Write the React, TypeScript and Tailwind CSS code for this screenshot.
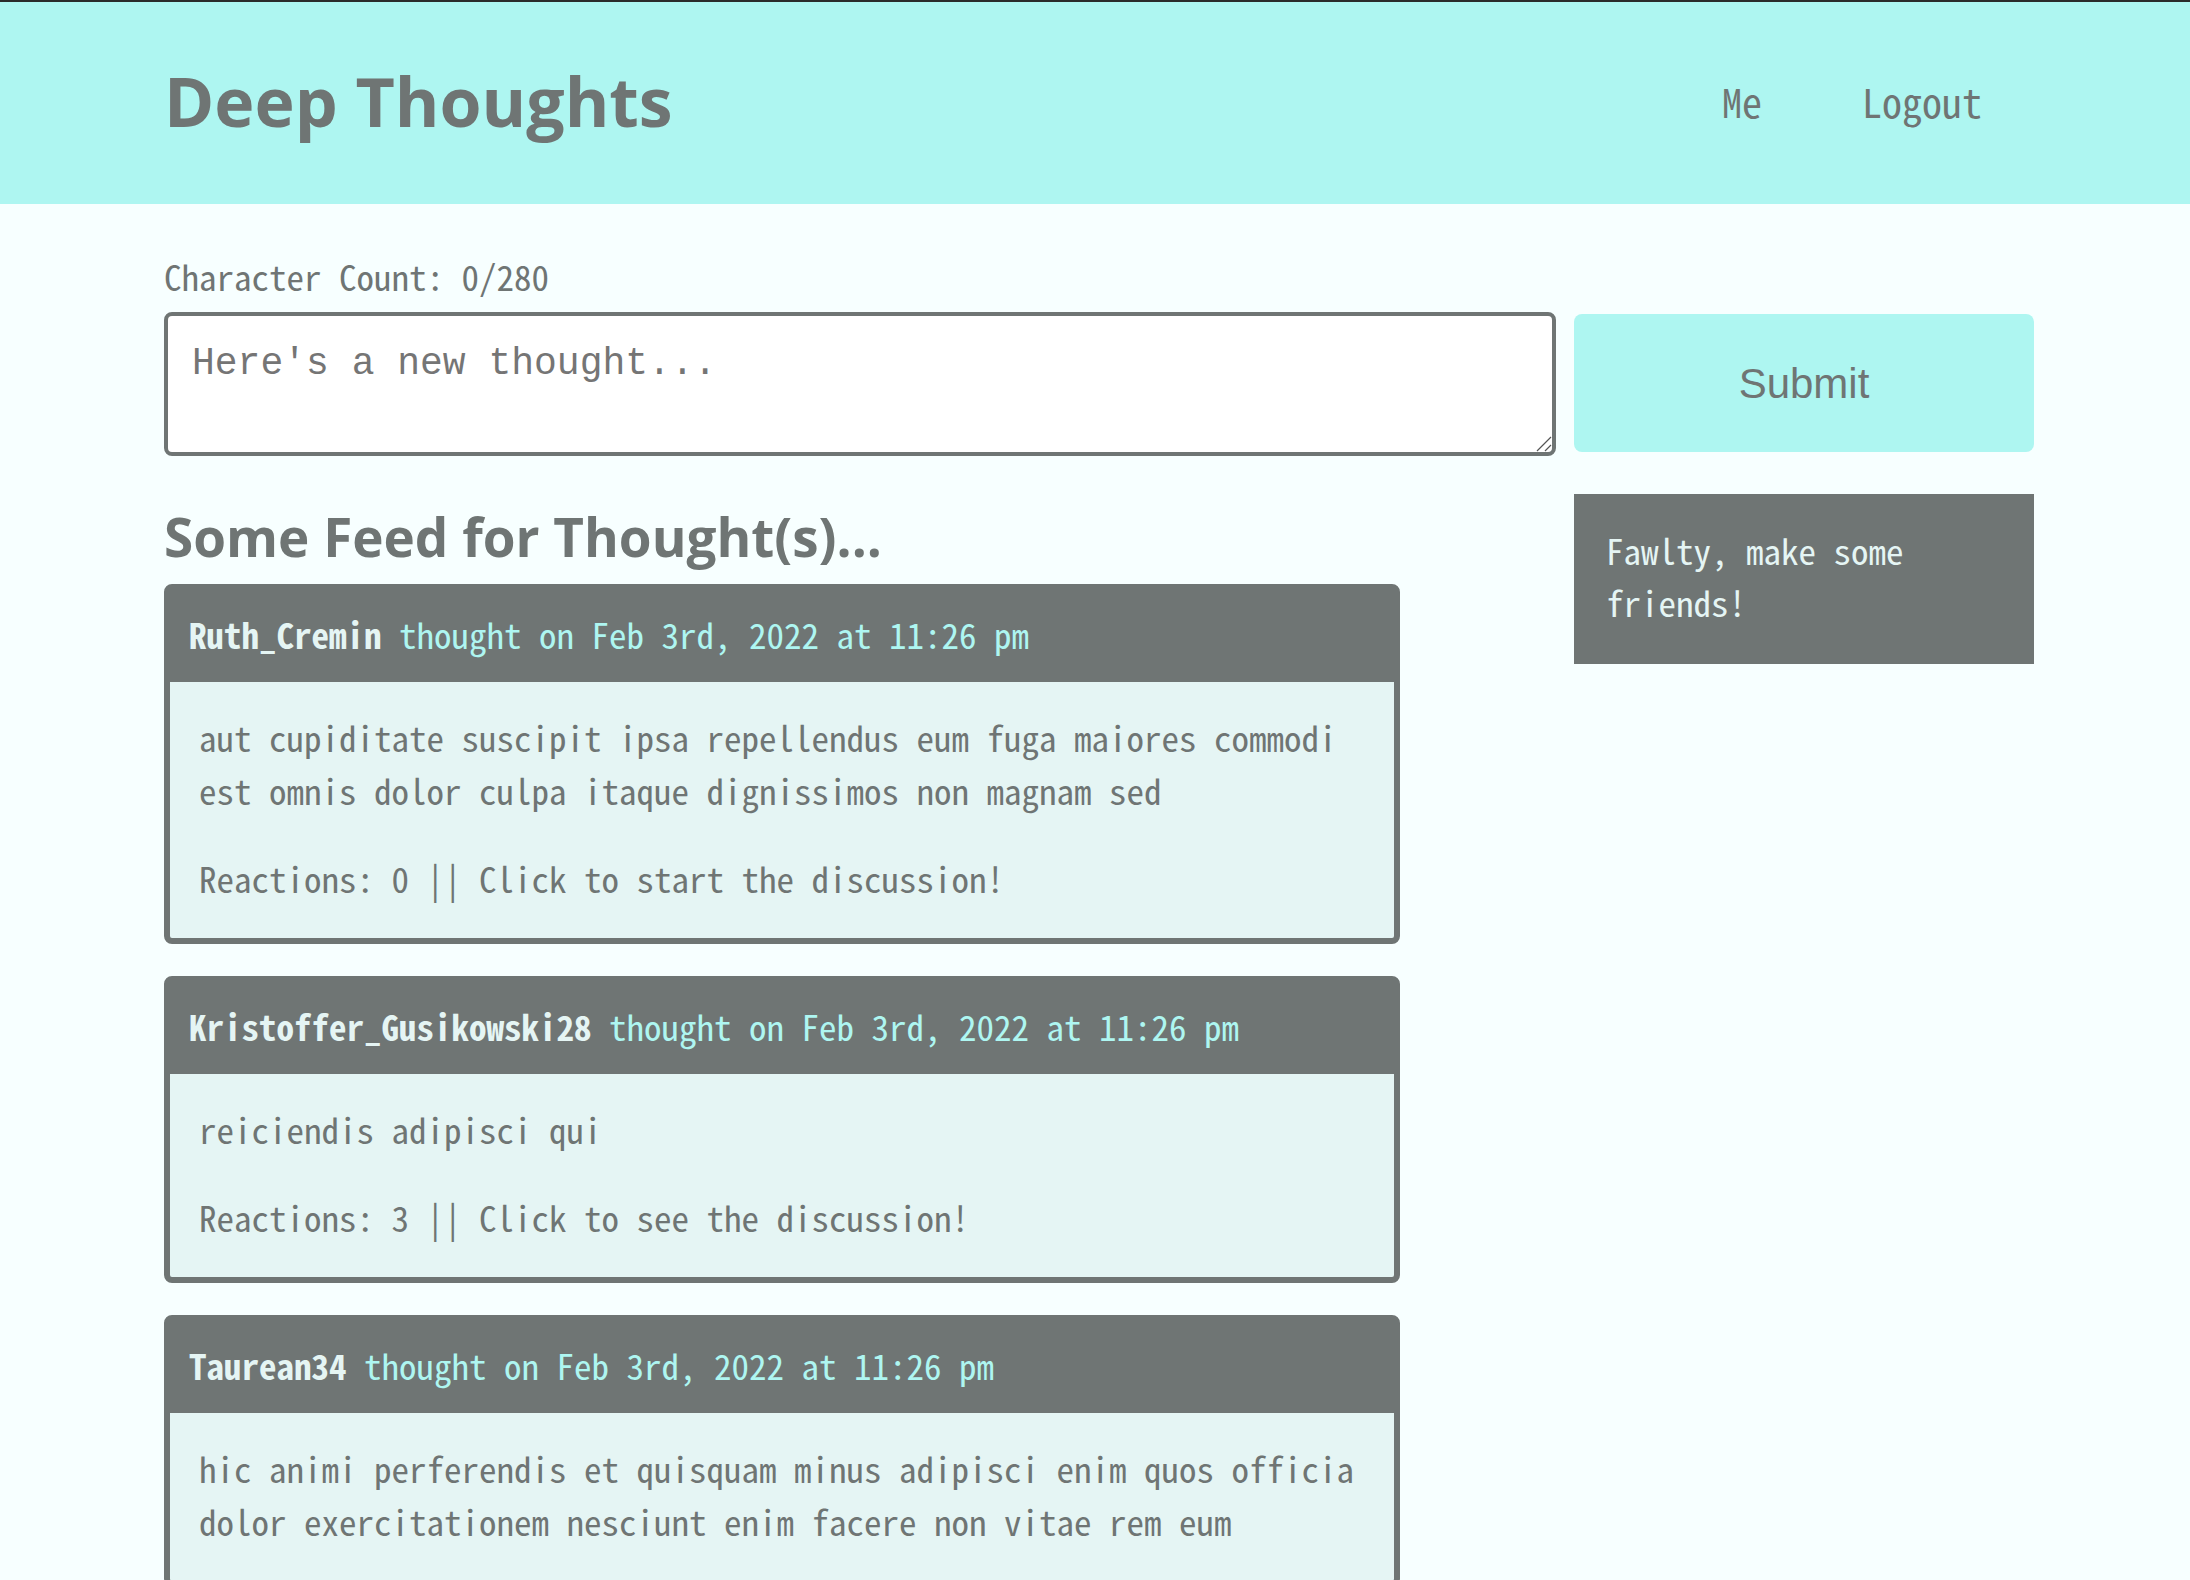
import { useState } from "react";

type Thought = {
  id: number;
  username: string;
  createdAt: string;
  text: string;
  reactionCount?: number;
};

const thoughts: Thought[] = [
  {
    id: 1,
    username: "Ruth_Cremin",
    createdAt: "Feb 3rd, 2022 at 11:26 pm",
    text: "aut cupiditate suscipit ipsa repellendus eum fuga maiores commodi est omnis dolor culpa itaque dignissimos non magnam sed",
    reactionCount: 0,
  },
  {
    id: 2,
    username: "Kristoffer_Gusikowski28",
    createdAt: "Feb 3rd, 2022 at 11:26 pm",
    text: "reiciendis adipisci qui",
    reactionCount: 3,
  },
  {
    id: 3,
    username: "Taurean34",
    createdAt: "Feb 3rd, 2022 at 11:26 pm",
    text: "hic animi perferendis et quisquam minus adipisci enim quos officia dolor exercitationem nesciunt enim facere non vitae rem eum",
  },
];

function Header() {
  return (
    <header className="flex h-[204px] items-center justify-between border-t-2 border-[#2b2b2b] bg-[#aef6f1] pr-[208px] pb-1 pl-[164px]">
      <h1 className="font-['Open_Sans',sans-serif] text-[68px] leading-[92px] font-bold">
        <a href="#home">Deep Thoughts</a>
      </h1>
      <nav className="flex gap-[100px] text-[40px] leading-[52px]">
        <a href="#me">Me</a>
        <a href="#logout">Logout</a>
      </nav>
    </header>
  );
}

function ThoughtForm() {
  const [text, setText] = useState("");
  return (
    <form onSubmit={(e) => e.preventDefault()}>
      <label htmlFor="thought" className="block">
        Character Count: {text.length}/280
      </label>
      <div className="mt-2.5 flex items-start gap-[18px]">
        <div className="relative min-w-0 flex-1">
          <textarea
            id="thought"
            value={text}
            maxLength={280}
            onChange={(e) => setText(e.target.value)}
            placeholder="Here's a new thought..."
            className="block h-36 w-full resize-none rounded-lg border-4 border-[#6f7574] bg-white px-6 py-[26px] font-['Liberation_Mono',monospace] text-[38px] leading-[44px] placeholder:text-[#757575]"
          />
          <svg
            aria-hidden="true"
            viewBox="0 0 16 16"
            className="pointer-events-none absolute right-1 bottom-1 size-4"
            stroke="#555"
            strokeWidth="1.2"
          >
            <path d="M1 15 15 1M9 15l6-6" />
          </svg>
        </div>
        <button
          type="submit"
          className="mt-0.5 h-[138px] w-[460px] rounded-lg bg-[#aef6f1] font-['Liberation_Sans',sans-serif] text-[42px]"
        >
          Submit
        </button>
      </div>
    </form>
  );
}

function ThoughtCard({ thought }: { thought: Thought }) {
  return (
    <article className="rounded-lg border-6 border-[#6f7574] bg-[#e5f5f4]">
      <p className="bg-[#6f7574] px-[19px] pt-[17px] pb-[22px] text-[#aef6f1]">
        <a href="#profile" className="font-bold text-[#e5f5f4]">
          {thought.username}
        </a>{" "}
        thought on {thought.createdAt}
      </p>
      <a href="#thought-detail" className="block px-[29px] pt-7 pb-[34px]">
        <p>{thought.text}</p>
        {thought.reactionCount !== undefined && (
          <p className="mt-[35px]">
            Reactions: {thought.reactionCount} || Click to{" "}
            {thought.reactionCount ? "see" : "start"} the discussion!
          </p>
        )}
      </a>
    </article>
  );
}

export default function App() {
  return (
    <div className="h-screen overflow-y-auto bg-[#f7ffff] font-['Noto_Sans_Mono_CJK_SC','Liberation_Mono',monospace] text-[35px] leading-[53px] text-[#6f7574] [scrollbar-width:none]">
      <Header />
      <main className="pt-[45px] pr-[156px] pb-8 pl-[164px]">
        <ThoughtForm />
        <div className="mt-[38px] flex items-start gap-[174px]">
          <section className="min-w-0 flex-1">
            <h2 className="pt-1 pb-2 font-['Open_Sans',sans-serif] text-[53px] leading-[78px] font-bold">
              Some Feed for Thought(s)...
            </h2>
            <div className="flex flex-col gap-8">
              {thoughts.map((t) => (
                <ThoughtCard key={t.id} thought={t} />
              ))}
            </div>
          </section>
          <aside className="w-[460px] bg-[#6f7574] px-8 pt-[30px] pb-9 leading-[52px] text-[#e5f5f4]">
            <p>Fawlty, make some friends!</p>
          </aside>
        </div>
      </main>
    </div>
  );
}
